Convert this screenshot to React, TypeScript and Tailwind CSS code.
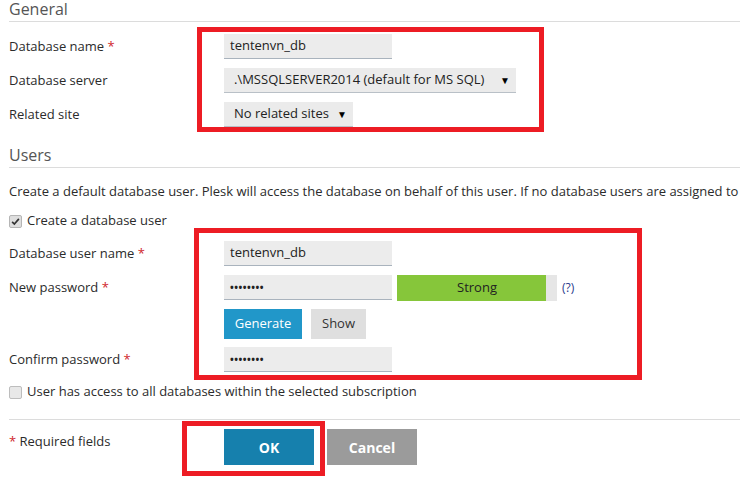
import React from "react";

const font = { fontFamily: '"Open Sans", "Liberation Sans", sans-serif' };

function Req() {
  return <span className="text-[#d0262c]"> *</span>;
}

function TextField({ value, secret }: { value: string; secret?: boolean }) {
  return (
    <div className="w-[168px] h-[25px] bg-[#ececec] border-b border-[#a9b3bd] flex items-center pl-[6px] text-[13px] text-[#222]">
      {secret ? <span className="text-[10px] tracking-[0.5px] font-bold">••••••••</span> : value}
    </div>
  );
}

function SelectBox({ value, width }: { value: string; width: string }) {
  return (
    <div className={`${width} h-[25px] bg-[#ebebeb] border-b border-[#b9c0c7] flex items-center justify-between pl-[10px] pr-[6px] text-[13px] text-[#222]`}>
      <span>{value}</span>
      <span className="text-[10px] text-black">▼</span>
    </div>
  );
}

function Row({ label, children }: { label: React.ReactNode; children: React.ReactNode }) {
  return (
    <div className="flex items-center">
      <div className="w-[215px] text-[13px] text-[#2b2b2b]">{label}</div>
      {children}
    </div>
  );
}

function Heading({ children }: { children: React.ReactNode }) {
  return (
    <h2 className="h-[22px] border-b border-[#dcdcdc] text-[16px] leading-[19px] text-[#555] mr-[12px]">
      {children}
    </h2>
  );
}

export default function App() {
  return (
    <div className="relative w-[752px] h-[485px] overflow-hidden bg-white" style={font}>
      <div className="pl-[9px]">
        <Heading>General</Heading>

        <div className="mt-[12px] flex flex-col gap-[9px]">
          <Row label={<>Database name<Req /></>}>
            <TextField value="tentenvn_db" />
          </Row>
          <Row label="Database server">
            <SelectBox value=".\MSSQLSERVER2014 (default for MS SQL)" width="w-[292px]" />
          </Row>
          <Row label="Related site">
            <SelectBox value="No related sites" width="w-[129px]" />
          </Row>
        </div>

        <div className="mt-[19px]">
          <Heading>Users</Heading>
        </div>

        <p className="mt-[14px] text-[13px] leading-[18px] text-[#2b2b2b] whitespace-nowrap">
          Create a default database user. Plesk will access the database on behalf of this user. If no database users are assigned to
        </p>

        <label className="mt-[12px] flex items-center h-[18px] text-[13px] text-[#2b2b2b]">
          <span className="w-[13px] h-[13px] rounded-[2px] bg-[#dedede] border border-[#b5b5b5] flex items-center justify-center">
            <svg viewBox="0 0 12 12" className="w-[9px] h-[9px]">
              <path d="M1.5 6.5 L4.5 9.5 L10.5 2.5" fill="none" stroke="#333" strokeWidth="2.2" />
            </svg>
          </span>
          <span className="ml-[5px]">Create a database user</span>
        </label>

        <div className="mt-[11px] flex flex-col gap-[8px]">
          <Row label={<>Database user name<Req /></>}>
            <TextField value="tentenvn_db" />
          </Row>
          <div className="mt-[1px]">
            <Row label={<>New password<Req /></>}>
              <div className="flex items-center">
                <div className="h-[26px]">
                  <TextField value="" secret />
                </div>
                <div className="ml-[5px] w-[160px] h-[26px] bg-[linear-gradient(to_right,#86c63a_149px,#e6e6e6_149px)] flex items-center justify-center text-[13px] text-[#222]">
                  Strong
                </div>
                <span className="ml-[5px] text-[12px] text-[#2a3a8c]">(?)</span>
              </div>
            </Row>
          </div>
          <Row label="">
            <div className="flex gap-[9px]">
              <button className="w-[78px] h-[30px] bg-[#2197c9] text-white text-[13px]">Generate</button>
              <button className="w-[55px] h-[30px] bg-[#dfdfdf] text-[#333] text-[13px]">Show</button>
            </div>
          </Row>
          <Row label={<>Confirm password<Req /></>}>
            <TextField value="" secret />
          </Row>
        </div>

        <label className="mt-[11px] flex items-center h-[18px] text-[13px] text-[#2b2b2b]">
          <span className="w-[13px] h-[13px] rounded-[2px] bg-[#e8e8e8] border border-[#bdbdbd]" />
          <span className="ml-[5px]">User has access to all databases within the selected subscription</span>
        </label>

        <div className="mt-[18px] mr-[12px] border-t border-[#dcdcdc]" />

        <div className="mt-[9px] flex items-start">
          <div className="w-[215px] text-[13px] leading-[24px] text-[#2b2b2b]">
            <span className="text-[#d0262c]">*</span> Required fields
          </div>
          <button className="w-[90px] h-[36px] bg-[#1680ad] text-white text-[14px] font-bold">OK</button>
          <button className="ml-[13px] w-[90px] h-[36px] bg-[#9b9b9b] text-white text-[14px] font-bold">Cancel</button>
        </div>
      </div>

      {/* annotation boxes drawn over the form */}
      <div className="absolute left-[197px] top-[27px] w-[347px] h-[105px] border-[5px] border-[#ed1c24]" />
      <div className="absolute left-[194px] top-[228px] w-[448px] h-[152px] border-[5px] border-[#ed1c24]" />
      <div className="absolute left-[182px] top-[421px] w-[143px] h-[55px] border-[5px] border-[#ed1c24]" />
    </div>
  );
}
